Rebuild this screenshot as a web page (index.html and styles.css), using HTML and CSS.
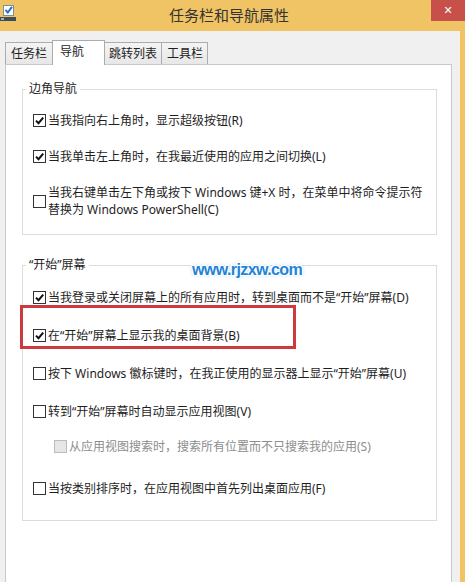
FILE: index.html
```html
<!DOCTYPE html>
<html>
<head>
	<title>任务栏和导航属性</title>
	<meta charset="UTF-8">
	<link rel="stylesheet" href="styles.css">
</head>
<body>
<div class="window">
	<div class="titlebar">
		<svg class="app-icon" width="16" height="17" viewBox="0 0 16 17">
			<rect x="3.5" y="0.5" width="10" height="10" fill="#fff" stroke="#7d8da0"/>
			<path d="M5.5 5 L7.8 7.5 L12 1.8" stroke="#2a6fc9" stroke-width="2" fill="none"/>
			<rect x="0" y="12" width="16" height="4" fill="#3f4c5e"/>
			<rect x="1" y="13" width="3" height="2" fill="#8fb4dc"/>
		</svg>
		<div class="title">任务栏和导航属性</div>
		<div class="close">✕</div>
	</div>
	<div class="client">
		<div class="tabs">
			<div class="tab">任务栏</div>
			<div class="tab active">导航</div>
			<div class="tab tab-jump">跳转列表</div>
			<div class="tab tab-tools">工具栏</div>
		</div>
		<div class="panel">
			<fieldset class="group group-corner">
				<legend>边角导航</legend>
				<div class="option">
					<span class="box"><svg viewBox="0 0 11 11"><path d="M2 5.6 L4.5 8.2 L9.2 2.6"/></svg></span>
					<span class="text">当我指向右上角时，显示超级按钮(R)</span>
				</div>
				<div class="option">
					<span class="box"><svg viewBox="0 0 11 11"><path d="M2 5.6 L4.5 8.2 L9.2 2.6"/></svg></span>
					<span class="text">当我单击左上角时，在我最近使用的应用之间切换(L)</span>
				</div>
				<div class="option">
					<span class="box"></span>
					<span class="text">当我右键单击左下角或按下 Windows 键+X 时，在菜单中将命令提示符<br>替换为 Windows PowerShell(C)</span>
				</div>
			</fieldset>
			<fieldset class="group group-start">
				<legend>“开始”屏幕</legend>
				<div class="watermark">www.rjzxw.com</div>
				<div class="annotation"></div>
				<div class="option">
					<span class="box"><svg viewBox="0 0 11 11"><path d="M2 5.6 L4.5 8.2 L9.2 2.6"/></svg></span>
					<span class="text">当我登录或关闭屏幕上的所有应用时，转到桌面而不是“开始”屏幕(D)</span>
				</div>
				<div class="option">
					<span class="box"><svg viewBox="0 0 11 11"><path d="M2 5.6 L4.5 8.2 L9.2 2.6"/></svg></span>
					<span class="text">在“开始”屏幕上显示我的桌面背景(B)</span>
				</div>
				<div class="option">
					<span class="box"></span>
					<span class="text">按下 Windows 徽标键时，在我正使用的显示器上显示“开始”屏幕(U)</span>
				</div>
				<div class="option">
					<span class="box"></span>
					<span class="text">转到“开始”屏幕时自动显示应用视图(V)</span>
				</div>
				<div class="option sub disabled">
					<span class="box"></span>
					<span class="text">从应用视图搜索时，搜索所有位置而不只搜索我的应用(S)</span>
				</div>
				<div class="option">
					<span class="box"></span>
					<span class="text">当按类别排序时，在应用视图中首先列出桌面应用(F)</span>
				</div>
			</fieldset>
		</div>
	</div>
</div>
</body>
</html>
```

FILE: styles.css
```css
html, body { margin: 0; background: #f0f0f0; }
body { font: 12px "Noto Sans", "Noto Sans CJK SC", sans-serif; color: #1e1e1e; }

.window { width: 465px; height: 582px; overflow: hidden; background: #f0c464; display: flex; flex-direction: column; }

/* title bar */
.titlebar { height: 31px; flex: none; display: grid; grid-template-columns: 34px 1fr 34px; align-items: start; }
.app-icon { display: block; margin-top: 5px; }
.title { margin-top: 5px; line-height: 20px; font-size: 15px; text-align: center; padding-right: 7px; color: #333; font-family: "Noto Sans CJK SC", sans-serif; }
.close { height: 21px; background: #c8504a; color: #fff; text-align: center; font: bold 11px/21px "DejaVu Sans", sans-serif; }

/* client area */
.client { width: 460px; box-sizing: border-box; padding: 9px 8px 0 5px; background: #f0f0f0; display: flex; flex-direction: column; }

.tabs { display: flex; align-items: flex-end; height: 24px; }
.tab { height: 22px; box-sizing: border-box; border: 1px solid #acacac; border-bottom: none; background: linear-gradient(#f4f4f4, #e7e7e7); padding: 0 5px; line-height: 21px; white-space: nowrap; }
.tab + .tab { margin-left: -1px; }
.tab.active { height: 25px; margin-bottom: -1px; position: relative; z-index: 1; background: #fff; padding: 0 20px 3px 7px; }
.tab-jump { padding: 0 4px; }
.tab-tools { padding: 0 4px 0 5px; }

.panel { min-height: 560px; background: #fff; border: 1px solid #c9c9c9; padding: 0 14px 0 16px; }

/* group boxes */
.group { margin: 16px 0 0; padding: 15px 10px 16px; border: 1px solid #dcdcdc; min-width: 0; }
.group legend { padding: 0 3px; margin-left: -7px; line-height: 16px; }
.group-start { margin-top: 22px; padding: 16px 10px 23px; position: relative; }

.option { display: flex; align-items: center; line-height: 17px; white-space: nowrap; }
.option + .option { margin-top: 19px; }
.group-start .option + .option { margin-top: 21px; }
.group-start .option.sub { margin-top: 18px; }
.group-start .sub + .option { margin-top: 25px; }
.sub { margin-left: 21px; }

.box { width: 13px; height: 13px; box-sizing: border-box; border: 1px solid #333; background: #fff; margin-right: 2px; flex: none; display: flex; align-items: center; justify-content: center; }
.box svg { width: 11px; height: 11px; }
.box path { fill: none; stroke: #111; stroke-width: 2; }

.disabled { color: #8d8d8d; }
.disabled .box { background: #e6e6e6; border-color: #bcbcbc; }

/* overlays */
.watermark { position: absolute; left: 169px; top: -12px; font: bold 16px/18px "Liberation Sans", sans-serif; letter-spacing: -0.6px; color: #2383d6;
	text-shadow: 1px 0 #fff, -1px 0 #fff, 0 1px #fff, 0 -1px #fff, 1px 1px #fff, -1px -1px #fff, 1px -1px #fff, -1px 1px #fff, 0 0 4px #8cc8f5; }
.annotation { position: absolute; left: -3px; top: 32px; width: 276px; height: 44px; box-sizing: border-box; border: 3px solid #cc3a3e; }
```
